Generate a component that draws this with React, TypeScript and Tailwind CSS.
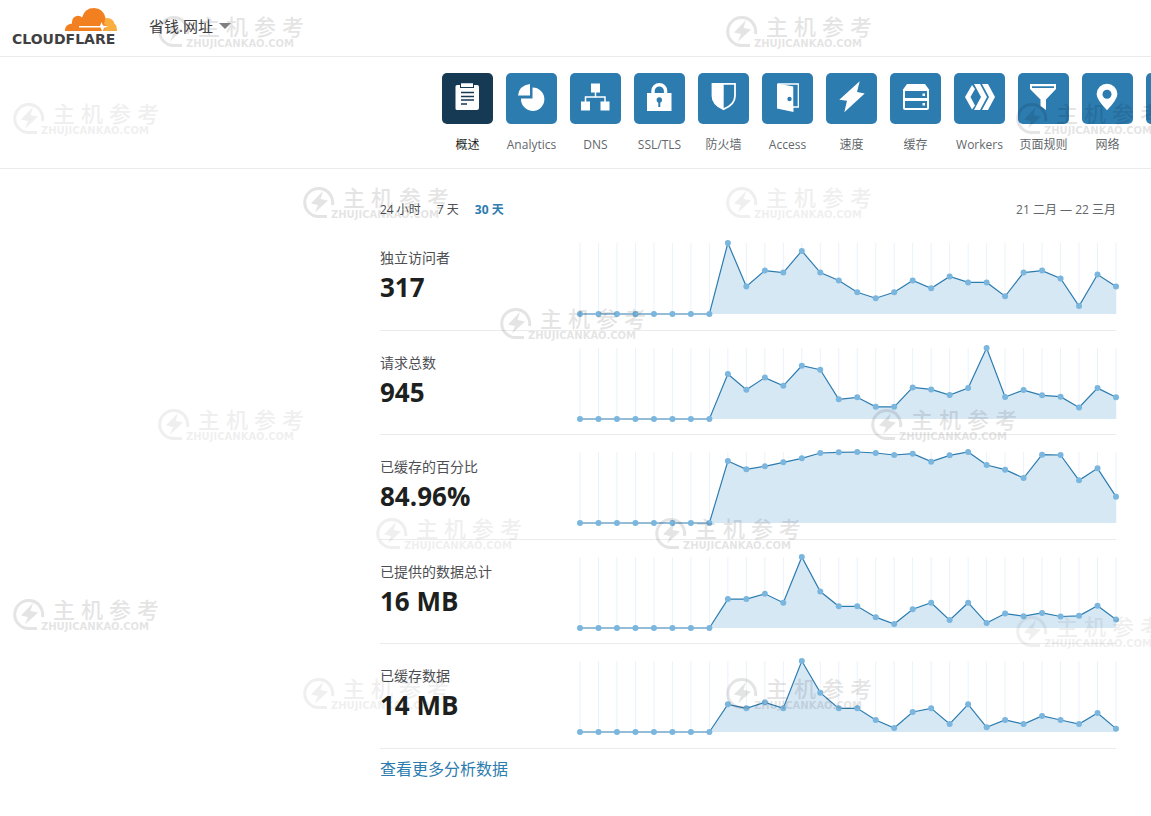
import { useState } from "react";
import type { ReactNode } from "react";

const zeros = [0, 0, 0, 0, 0, 0, 0, 0];

const stats = [
  {
    label: "独立访问者",
    value: "317",
    points: [...zeros, 36, 14, 22, 21, 32, 21, 17, 11, 8, 11, 17, 13, 19, 16, 16, 9, 21, 22, 18, 4, 20, 14],
  },
  {
    label: "请求总数",
    value: "945",
    points: [...zeros, 137, 89, 126, 101, 162, 150, 60, 66, 37, 37, 96, 90, 73, 94, 216, 67, 88, 72, 68, 35, 94, 66],
  },
  {
    label: "已缓存的百分比",
    value: "84.96%",
    points: [...zeros, 186, 161, 170, 182, 194, 210, 212, 213, 210, 204, 208, 184, 203, 213, 174, 160, 135, 205, 204, 128, 164, 79],
  },
  {
    label: "已提供的数据总计",
    value: "16 MB",
    points: [...zeros, 88, 88, 104, 77, 216, 111, 66, 66, 33, 12, 57, 77, 24, 77, 15, 44, 36, 46, 35, 37, 68, 26],
  },
  {
    label: "已缓存数据",
    value: "14 MB",
    points: [...zeros, 83, 71, 89, 71, 213, 118, 71, 71, 36, 12, 60, 71, 24, 83, 14, 36, 24, 48, 36, 24, 57, 10],
  },
];

const tabs: { name: string; icon: ReactNode }[] = [
  {
    name: "概述",
    icon: (
      <>
        <path d="M15 12h3v3h14v-3h3q2 0 2 2v21q0 2-2 2H15q-1.500 0-1.500-1.500V13.500q0-1.500 1.500-1.500z" fill="#fff" />
        <path d="M19 10.300h12v3.700H19z" fill="#fff" />
        <path d="M19 19.500h13M19 23.500h13M19 27h13M19 31h6" stroke="#163a54" strokeWidth="1.500" />
      </>
    ),
  },
  {
    name: "Analytics",
    icon: (
      <>
        <path d="M26.500 14.500V25.500H15A11.700 11.700 0 1 0 26.500 14.500z" fill="#fff" />
        <path d="M24 11V22.500H12Q13 12.500 24 11z" fill="#fff" />
      </>
    ),
  },
  {
    name: "DNS",
    icon: (
      <>
        <path d="M21 10.500h9v9h-9zM11 28.500h9v9h-9zM30.500 28.500h9v9h-9z" fill="#fff" />
        <path d="M25.500 19v5M15.500 29v-5h19.500v5" fill="none" stroke="#fff" strokeWidth="1.500" />
      </>
    ),
  },
  {
    name: "SSL/TLS",
    icon: (
      <>
        <path d="M19 21v-3a6.300 6.300 0 0 1 12.600 0v3" fill="none" stroke="#fff" strokeWidth="3.400" />
        <path d="M13 20h24.500v18H13z" fill="#fff" />
        <circle cx="25.300" cy="27" r="2.700" fill="#2c7cb0" />
        <path d="M24.300 28h2v6h-2z" fill="#2c7cb0" />
      </>
    ),
  },
  {
    name: "防火墙",
    icon: (
      <>
        <path d="M14.500 10.800h22.500v12.200q0 8.500-11.300 13.200Q14.500 31.500 14.500 23z" fill="none" stroke="#fff" strokeWidth="1.800" />
        <path d="M14 10.500h11.700v26.500Q14 31.500 14 23z" fill="#fff" />
      </>
    ),
  },
  {
    name: "Access",
    icon: (
      <>
        <path d="M16 11h20.300v23H31" fill="none" stroke="#fff" strokeWidth="1.300" />
        <path d="M15 10.500l16.500 3V39L15 35.500z" fill="#fff" />
        <path d="M31.500 13h3v20h-3z" fill="#2c7cb0" />
        <circle cx="27.500" cy="26" r="2.200" fill="#2c7cb0" />
      </>
    ),
  },
  {
    name: "速度",
    icon: <path d="M33.700 8.300L31 19l7.700 1.500L18.300 39.300 21 27.700l-7.700-1z" fill="#fff" />,
  },
  {
    name: "缓存",
    icon: (
      <>
        <path d="M17 11h18l4 5.500V35q0 2-2 2H15q-2 0-2-2V16.500z" fill="#fff" />
        <path d="M15 18h22v7H15zM15 28h22v7H15z" fill="#2c7cb0" />
        <path d="M32.500 20.500h2.500v2.500h-2.500zM32.500 30h2.500v2.500h-2.500z" fill="#fff" />
      </>
    ),
  },
  {
    name: "Workers",
    icon: (
      <>
        <path d="M18 12L11 24l7 12.500 3-4L16.500 24l4.500-8z" fill="#fff" />
        <path d="M20 11h6l7 13-7 13h-6l7-13z" fill="#fff" />
        <path d="M28 11h6l7 13-7 13h-6l7-13z" fill="#fff" />
      </>
    ),
  },
  {
    name: "页面规则",
    icon: (
      <>
        <path d="M12 11h26v5L28 26.500V37l-5.500-4v-6.500L12 16z" fill="#fff" />
        <path d="M14 13.300h22v1.600H14z" fill="#2c7cb0" />
      </>
    ),
  },
  {
    name: "网络",
    icon: (
      <>
        <path d="M25 10.700A10.400 10.400 0 0 1 35.400 21Q35.400 26.500 25 37.300 14.600 26.500 14.600 21A10.400 10.400 0 0 1 25 10.700z" fill="#fff" />
        <circle cx="25" cy="21.300" r="4.500" fill="#2c7cb0" />
      </>
    ),
  },
  {
    name: "",
    icon: <path d="M14 14h23v18H14z" fill="#fff" />,
  },
];

const ranges = ["24 小时", "7 天", "30 天"];

const marks = [
  { x: 158, y: 15, faint: false },
  { x: 726, y: 15, faint: false },
  { x: 13, y: 102, faint: true },
  { x: 1016, y: 102, faint: false },
  { x: 303, y: 186, faint: false },
  { x: 726, y: 186, faint: true },
  { x: 500, y: 307, faint: false },
  { x: 158, y: 408, faint: true },
  { x: 871, y: 408, faint: false },
  { x: 376, y: 517, faint: true },
  { x: 655, y: 517, faint: false },
  { x: 13, y: 598, faint: false },
  { x: 1016, y: 615, faint: true },
  { x: 303, y: 677, faint: true },
  { x: 726, y: 677, faint: false },
];

function Watermark({ x, y, faint }: { x: number; y: number; faint: boolean }) {
  return (
    <div
      className={"absolute flex w-[146px] text-black " + (faint ? "opacity-[0.06]" : "opacity-[0.1]")}
      style={{ left: x, top: y }}
    >
      <svg className="h-8 w-8 shrink-0" viewBox="0 0 32 32" fill="none">
        <path d="M24 30.500H17A14 14 0 1 1 29.500 19" stroke="currentColor" strokeWidth="3" />
        <path d="M20 5L8 17.500l7 1.500-3 7.500L25 14.500l-7.500-1.500z" fill="currentColor" />
      </svg>
      <div className="flex flex-col">
        <div className="flex gap-[6px] pl-2 text-[22px] leading-[23px] font-medium">
          <span>主</span>
          <span>机</span>
          <span>参</span>
          <span>考</span>
        </div>
        <div className="-ml-1 font-['DejaVu_Sans',sans-serif] text-[10px] leading-[11px] font-bold">ZHUJICANKAO.COM</div>
      </div>
    </div>
  );
}

function Logo() {
  return (
    <a href="#" className="flex w-[105px] flex-col" aria-label="Cloudflare">
      <svg className="h-6 w-[52px] self-end" viewBox="0 0 52 24">
        <path d="M40 10.500q2-.8 4-.3 4.500 1 5.500 5.500 2.500 1.500 2.500 7.300H35z" fill="#faae40" />
        <path d="M0 23q-.5-6.500 7-7.500-.5-6 4.500-7.500 3.500-1 5.500 1.500Q19.500 0 29 0q9.500.5 11.500 10L39 16l3 2-4 5z" fill="#f38020" />
        <path d="M14 18h21l1.500-4 1.500 3.500 5 1-4 1.500-1.500 4-2-4.500H14z" fill="#fff" />
      </svg>
      <span className="font-['DejaVu_Sans',sans-serif] text-[14px] leading-[14px] font-bold text-[#404041]">CLOUDFLARE</span>
    </a>
  );
}

function Chart({ points }: { points: number[] }) {
  const width = 536;
  const height = 71;
  const max = Math.max(...points);
  const coords = points.map((p, i) => [(i * width) / (points.length - 1), height - (p / max) * height]);
  const line = coords.map((c) => c.join(",")).join(" ");

  return (
    <svg className="block w-full overflow-visible" viewBox={`0 0 ${width} ${height}`}>
      {coords.map(([x]) => (
        <line key={x} x1={x} x2={x} y1={0} y2={height} stroke="#e9f3fa" />
      ))}
      <polygon points={`0,${height} ${line} ${width},${height}`} fill="#d7e8f5" />
      <polyline points={line} fill="none" stroke="#2c7cb0" strokeWidth="1.200" />
      {coords.map(([x, y]) => (
        <circle key={x} cx={x} cy={y} r="3" fill="#7ab6dd" />
      ))}
    </svg>
  );
}

export default function App() {
  const [tab, setTab] = useState("概述");
  const [range, setRange] = useState("30 天");

  return (
    <div className="relative min-h-screen overflow-hidden bg-white font-['Open_Sans','Noto_Sans_CJK_SC',sans-serif] text-[#4d4f53]">
      <header className="flex h-[57px] items-start gap-8 border-b border-[#ebebeb] pt-2 pl-3">
        <Logo />
        <button className="flex items-center gap-[6px] pt-2 text-[15px] leading-5 text-[#404041]">
          省钱.网址
          <svg className="h-[6px] w-3" viewBox="0 0 12 6">
            <path d="M0 0h12L6 6z" fill="#7d7f82" />
          </svg>
        </button>
      </header>

      <nav className="flex gap-[13px] overflow-hidden border-b border-[#ebebeb] pt-4 pb-[13px] pl-[442px]">
        {tabs.map((t) => (
          <a
            key={t.name}
            href="#"
            aria-label={t.name || "更多"}
            onClick={() => setTab(t.name)}
            className="flex w-[51px] shrink-0 flex-col items-center gap-[11px]"
          >
            <svg
              className={"h-[51px] w-[51px] rounded-[5px] " + (t.name === tab ? "bg-[#163a54]" : "bg-[#2c7cb0]")}
              viewBox="0 0 51 51"
            >
              {t.icon}
            </svg>
            <span className={"text-[12px] leading-5 whitespace-nowrap " + (t.name === tab ? "text-[#1d1f20]" : "text-[#62676b]")}>
              {t.name}
            </span>
          </a>
        ))}
      </nav>

      <main className="pt-[31px] pr-[35px] pb-8 pl-[380px]">
        <div className="mb-[6px] flex items-center justify-between text-[12px] leading-5">
          <div className="flex gap-4">
            {ranges.map((r) => (
              <button key={r} onClick={() => setRange(r)} className={r === range ? "font-bold text-[#2c7cb0]" : ""}>
                {r}
              </button>
            ))}
          </div>
          <span className="text-[#62676b]">21 二月 — 22 三月</span>
        </div>

        <div className="grid min-h-[523px] auto-rows-fr">
          {stats.map((s) => (
            <section key={s.label} className="grid grid-cols-[200px_1fr] border-b border-[#ebebeb] pt-[17px]">
              <div className="pt-[5px]">
                <h2 className="text-[14px] leading-5">{s.label}</h2>
                <p className="mt-1 text-[26px] leading-[30px] font-bold text-[#1d1f20]">{s.value}</p>
              </div>
              <Chart points={s.points} />
            </section>
          ))}
        </div>

        <a href="#" className="mt-2 inline-block text-[16px] leading-6 text-[#2c7cb0]">
          查看更多分析数据
        </a>
      </main>

      <div className="pointer-events-none" aria-hidden="true">
        {marks.map((m) => (
          <Watermark key={`${m.x}-${m.y}`} x={m.x} y={m.y} faint={m.faint} />
        ))}
      </div>
    </div>
  );
}
